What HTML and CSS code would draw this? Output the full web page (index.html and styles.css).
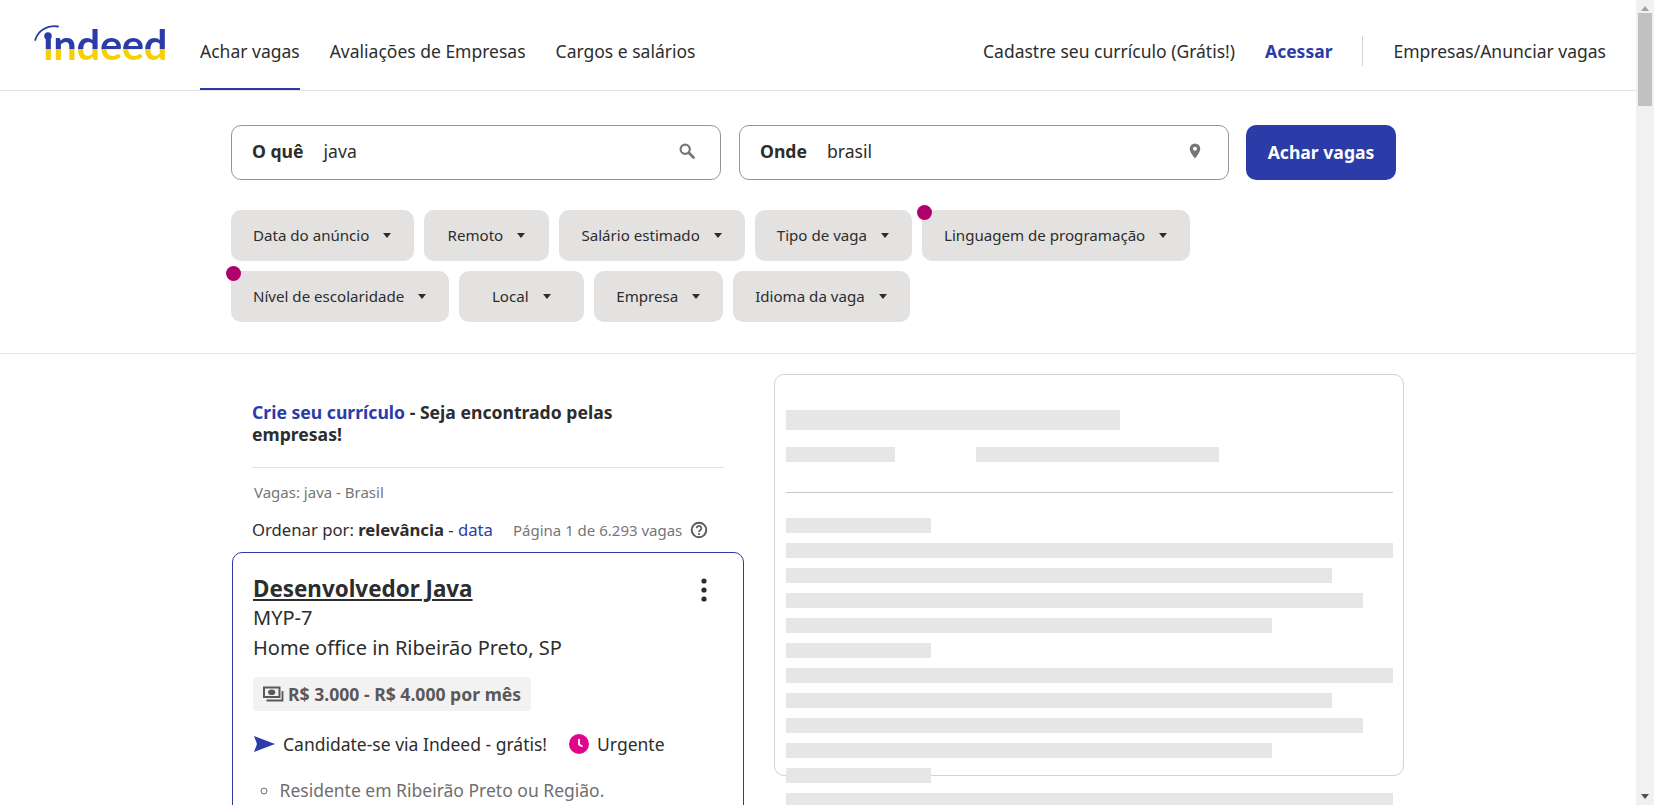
FILE: index.html
```html
<!DOCTYPE html>
<html lang="pt-BR">
<head>
    <meta charset="UTF-8">
    <meta name="viewport" content="width=device-width, initial-scale=1.0">
    <title>Vagas: java - Brasil | Indeed</title>
    <link rel="stylesheet" href="styles.css">
</head>
<body>
<div class="app">
    <div class="page">
        <header class="topbar">
            <a class="logo" href="#">
                <svg class="logo-arc" width="30" height="26" viewBox="0 0 30 26"><path d="M1.200 16C3.500 7.500 13 .5 24 2.500" fill="none" stroke="#2b3ca8" stroke-width="1.800" stroke-linecap="round"/><circle cx="14" cy="12" r="3.800" fill="#2b3ca8"/></svg>
                <span class="logo-text">ındeed</span>
            </a>
            <nav class="nav">
                <a class="nav-link active" href="#">Achar vagas</a>
                <a class="nav-link" href="#">Avaliações de Empresas</a>
                <a class="nav-link" href="#">Cargos e salários</a>
            </nav>
            <div class="nav-right">
                <a class="nav-link" href="#">Cadastre seu currículo (Grátis!)</a>
                <a class="nav-link login" href="#">Acessar</a>
                <span class="nav-sep"></span>
                <a class="nav-link" href="#">Empresas/Anunciar vagas</a>
            </div>
        </header>

        <section class="search-area">
            <form class="search-row">
                <div class="search-box">
                    <b>O quê</b><span class="search-value">java</span>
                    <svg class="search-icon" width="18" height="18" viewBox="0 0 18 18"><circle cx="7.200" cy="7.200" r="4.600" fill="none" stroke="#767676" stroke-width="2.200"/><path d="M10.800 10.800L15.500 15.500" stroke="#767676" stroke-width="2.800" stroke-linecap="round"/></svg>
                </div>
                <div class="search-box">
                    <b>Onde</b><span class="search-value">brasil</span>
                    <svg class="search-icon" width="18" height="18" viewBox="0 0 18 18"><path fill="#767676" fill-rule="evenodd" d="M9 1.500a5.300 5.300 0 0 0-5.300 5.300C3.700 10.600 9 16.500 9 16.500s5.300-5.900 5.300-9.700A5.300 5.300 0 0 0 9 1.500zm0 7.300a2 2 0 1 1 0-4 2 2 0 0 1 0 4z"/></svg>
                </div>
                <button class="search-btn" type="button">Achar vagas</button>
            </form>
            <div class="filters">
                <button class="chip" type="button">Data do anúncio<i class="caret"></i></button>
                <button class="chip" type="button">Remoto<i class="caret"></i></button>
                <button class="chip" type="button">Salário estimado<i class="caret"></i></button>
                <button class="chip" type="button">Tipo de vaga<i class="caret"></i></button>
                <button class="chip marked" type="button">Linguagem de programação<i class="caret"></i></button>
                <button class="chip marked" type="button">Nível de escolaridade<i class="caret"></i></button>
                <button class="chip" type="button">Local<i class="caret"></i></button>
                <button class="chip" type="button">Empresa<i class="caret"></i></button>
                <button class="chip" type="button">Idioma da vaga<i class="caret"></i></button>
            </div>
        </section>

        <main class="results">
            <div class="job-list">
                <p class="promo"><a href="#">Crie seu currículo</a> - Seja encontrado pelas<br>empresas!</p>
                <p class="query">Vagas: java - Brasil</p>
                <div class="sort-row">
                    <span>Ordenar por: <b>relevância</b> - <a href="#">data</a></span>
                    <span class="count">Página 1 de 6.293 vagas</span>
                    <svg width="18" height="18" viewBox="0 0 18 18"><circle cx="9" cy="9" r="7.300" fill="none" stroke="#595959" stroke-width="1.900"/><path d="M6.700 7.200a2.300 2.300 0 1 1 3.500 2c-.8.500-1.200.9-1.200 1.700" fill="none" stroke="#595959" stroke-width="1.700"/><circle cx="9" cy="13" r="1.100" fill="#595959"/></svg>
                </div>
                <article class="job-card">
                    <div class="job-head">
                        <h2><a href="#">Desenvolvedor Java</a></h2>
                        <svg class="job-menu" width="6" height="24" viewBox="0 0 6 24"><circle cx="3" cy="3" r="2.600" fill="#2d2d2d"/><circle cx="3" cy="12" r="2.600" fill="#2d2d2d"/><circle cx="3" cy="21" r="2.600" fill="#2d2d2d"/></svg>
                    </div>
                    <p class="company">MYP-7</p>
                    <p class="location">Home office in Ribeirão Preto, SP</p>
                    <div class="salary">
                        <svg width="21" height="18" viewBox="0 0 21 18"><path fill="#595959" fill-rule="evenodd" d="M0 1.500h17.500v11.500H0zM2 3.500v7.500h13.500V3.500z"/><ellipse cx="8.700" cy="7.200" rx="3.600" ry="2.800" fill="#595959"/><path d="M19.500 6v9.500H3.500" fill="none" stroke="#595959" stroke-width="1.800"/></svg>
                        R$ 3.000 - R$ 4.000 por mês
                    </div>
                    <div class="job-tags">
                        <svg class="send" width="21" height="16" viewBox="0 0 21 16"><path fill="#2b3ca8" d="M0 0l21 8L0 16l3-8z"/></svg>
                        <span class="apply">Candidate-se via Indeed - grátis!</span>
                        <svg width="20" height="20" viewBox="0 0 20 20"><circle cx="10" cy="10" r="10" fill="#e0068c"/><path d="M10 5v5.500l3.500 2" fill="none" stroke="#fff" stroke-width="1.900"/></svg>
                        <span>Urgente</span>
                    </div>
                    <ul class="snippet">
                        <li>Residente em Ribeirão Preto ou Região.</li>
                    </ul>
                </article>
            </div>

            <aside class="job-preview">
                <div class="sk sk-title"></div>
                <div class="sk-row">
                    <div class="sk sk-company"></div>
                    <div class="sk sk-place"></div>
                </div>
                <hr class="sk-line">
                <div class="sk sk-short"></div>
                <div class="sk w100"></div>
                <div class="sk w90"></div>
                <div class="sk w95"></div>
                <div class="sk w80"></div>
                <div class="sk sk-short"></div>
                <div class="sk w100"></div>
                <div class="sk w90"></div>
                <div class="sk w95"></div>
                <div class="sk w80"></div>
                <div class="sk sk-short"></div>
                <div class="sk w100"></div>
            </aside>
        </main>
    </div>

    <div class="scrollbar">
        <span class="arrow up"></span>
        <div class="track"><div class="thumb"></div></div>
        <span class="arrow down"></span>
    </div>
</div>
</body>
</html>
```

FILE: styles.css
```css
* { box-sizing: border-box; }
html, body { height: 100%; }
body { margin: 0; overflow: hidden; background-color: #fff; color: #2d2d2d; font-family: "Noto Sans", "Open Sans", sans-serif; font-size: 17.6px; }
a { color: inherit; text-decoration: none; }
p { margin: 0; }

.app { display: flex; height: 805px; overflow: hidden; }
.page { flex: 1; min-width: 0; overflow: hidden; }

/* barra de rolagem */
.scrollbar { width: 18px; background-color: #f1f1f1; display: flex; flex-direction: column; align-items: center; }
.track { flex: 1; width: 100%; padding: 0 2px; }
.thumb { height: 93px; background-color: #c1c1c1; }
.arrow { width: 0; height: 0; border-left: 4px solid transparent; border-right: 4px solid transparent; margin: 6px 0 6px; }
.arrow.up { border-bottom: 5px solid #a3a3a3; margin-bottom: 2px; }
.arrow.down { border-top: 5px solid #505050; margin-top: 3px; }

/* topo */
.topbar { display: flex; align-items: stretch; height: 91px; padding: 0 30px 0 34px; border-bottom: 1px solid #e4e2e0; font-size: 17.5px; }
.logo { position: relative; display: block; width: 132px; margin-right: 34px; }
.logo-arc { position: absolute; left: 0; top: 24px; }
.logo-text { position: absolute; left: 9px; top: 16px; font-family: "Lato", sans-serif; font-weight: 700; font-size: 41.7px; line-height: 56px; letter-spacing: -.3px; color: transparent; background: linear-gradient(#2b3ca8 0 59%, #f6d000 59%); -webkit-background-clip: text; background-clip: text; }
.nav { display: flex; gap: 30px; }
.nav-right { display: flex; align-items: center; gap: 30px; margin-left: auto; }
.nav-link { display: flex; align-items: center; height: 90px; padding-top: 12px; }
.nav-link.active { box-shadow: inset 0 -2px 0 #2b3ca8; }
.nav-link.login { color: #2b3ca8; font-weight: 700; }
.nav-sep { width: 1px; height: 30px; margin-top: 12px; background-color: #d4d2d0; }

/* busca */
.search-area { padding: 34px 0 31px; border-bottom: 1px solid #e4e2e0; }
.search-row { display: flex; width: 1174px; margin: 0 auto 30px; gap: 18px; }
.search-box { display: flex; align-items: center; width: 490px; height: 55px; padding: 0 24px 3px 20px; border: 1px solid #949494; border-radius: 10px; }
.search-box b { margin-right: 20px; }
.search-icon { margin-left: auto; }
.search-btn { width: 150px; height: 55px; margin-left: -1px; padding-bottom: 3px; border: none; border-radius: 10px; background-color: #2b3ca8; color: #fff; font: 700 17.6px "Noto Sans", sans-serif; }
.filters { display: flex; flex-wrap: wrap; gap: 10px; width: 1174px; margin: 0 auto; }
.chip { position: relative; display: flex; align-items: center; justify-content: center; min-width: 125px; height: 51px; padding: 0 23px 1px 22px; border: none; border-radius: 10px; background-color: #e4e2e0; color: #2d2d2d; font: 15.1px "Noto Sans", sans-serif; }
.chip.marked::before { content: ""; position: absolute; left: -5px; top: -5px; width: 15px; height: 15px; border-radius: 50%; background-color: #b0006b; }
.caret { width: 0; height: 0; margin-left: 14px; border-left: 4.500px solid transparent; border-right: 4.500px solid transparent; border-top: 5px solid #2d2d2d; }

/* resultados */
.results { display: flex; gap: 30px; width: 1174px; margin: 0 auto; padding-top: 20px; }
.job-list { width: 513px; padding-left: 1px; flex: none; }
.promo { margin: 27px 0 0 20px; width: 472px; padding-bottom: 22px; border-bottom: 1px solid #e4e2e0; font-weight: 700; line-height: 22px; }
.promo a { color: #2b3ca8; }
.query { margin: 14px 0 0 22px; font-size: 15px; line-height: 20px; color: #767676; }
.sort-row { display: flex; align-items: center; margin: 16px 0 0 20px; gap: 8px; font-size: 16.7px; }
.sort-row a { color: #2b3ca8; }
.count { margin-left: 12px; font-size: 15px; color: #767676; }
.job-card { height: 400px; margin-top: 11px; padding: 21px 20px; border: 1px solid #2b3ca8; border-radius: 10px; }
.job-head { display: flex; justify-content: space-between; align-items: flex-start; padding-right: 16px; }
.job-head h2 { margin: 0; font-size: 22.4px; line-height: 30px; font-weight: 700; }
.job-head h2 a { text-decoration: underline; }
.job-menu { margin-top: 4px; }
.company, .location { font-size: 20px; line-height: 29px; }
.company { margin-top: -1px; }
.location { margin-top: 1px; }
.salary { display: inline-flex; align-items: center; gap: 4px; height: 34px; margin-top: 15px; padding: 0 10px; border-radius: 4px; background-color: #f3f2f1; color: #595959; font-weight: 700; font-size: 17.6px; }
.job-tags { display: flex; align-items: center; margin-top: 19px; height: 28px; font-size: 17.5px; }
.send { margin-left: 1px; }
.apply { margin: 0 22px 0 8px; }
.job-tags span:last-child { margin-left: 8px; }
.snippet { margin: 20px 0 0; padding-left: 26.500px; list-style: circle; color: #6f6f6f; line-height: 24px; font-size: 17.5px; }

/* painel carregando */
.job-preview { flex: none; width: 630px; height: 402px; padding: 35px 10px 0 11px; border: 1px solid #d4d2d0; border-radius: 10px; }
.sk { height: 15px; margin-bottom: 10px; background-color: #e6e6e6; }
.sk-title { width: 334px; height: 20px; margin-bottom: 17px; }
.sk-row { display: flex; gap: 81px; }
.sk-company { width: 109px; }
.sk-place { width: 243px; }
.sk-line { height: 1px; margin: 20px 0 25px; border: none; background-color: #c8c8c8; }
.sk-short { width: 145px; }
.w100 { width: 100%; }
.w90 { width: 90%; }
.w95 { width: 95%; }
.w80 { width: 80%; }
```
